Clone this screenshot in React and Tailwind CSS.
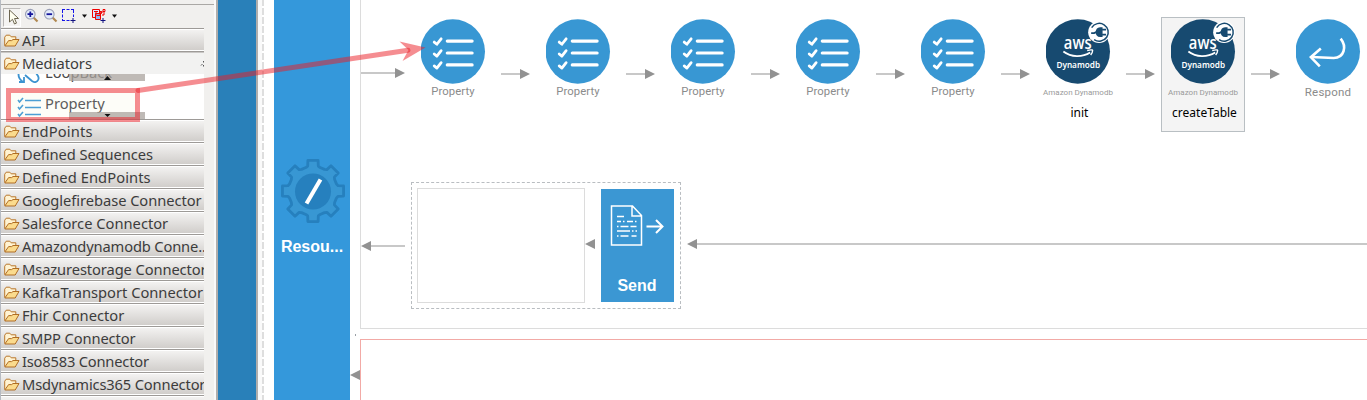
import React from "react";

const ubuntu = "font-['Noto_Sans',sans-serif]";

const drawers = [
  { name: "EndPoints", tracking: "tracking-[0.15px]" },
  { name: "Defined Sequences", tracking: "tracking-[-0.08px]" },
  { name: "Defined EndPoints", tracking: "tracking-[0.08px]" },
  { name: "Googlefirebase Connector", tracking: "tracking-[-0.05px]" },
  { name: "Salesforce Connector", tracking: "tracking-[0px]" },
  { name: "Amazondynamodb Conne..", tracking: "tracking-[-0.15px]" },
  { name: "Msazurestorage Connector", tracking: "tracking-[-0.1px]" },
  { name: "KafkaTransport Connector", tracking: "tracking-[0px]" },
  { name: "Fhir Connector", tracking: "tracking-[0px]" },
  { name: "SMPP Connector", tracking: "tracking-[-0.1px]" },
  { name: "Iso8583 Connector", tracking: "tracking-[-0.2px]" },
  { name: "Msdynamics365 Connector", tracking: "tracking-[-0.15px]" },
  { name: "", tracking: "" },
];

function Folder() {
  return (
    <svg className="h-[13px] w-4 shrink-0" viewBox="0 0 16 13">
      <path d="M.7 11.5V3.2L2.2 1.2h3.6l1.4 1.6h4.6v3" fill="#fff3d2" stroke="#b9772c" />
      <path d="M.8 12 4.6 6.6h3L9 5.5h6L11.2 12z" fill="#fbdb8d" stroke="#b06d24" strokeLinejoin="round" />
    </svg>
  );
}

function Drawer({ name, tracking }) {
  return (
    <div className="flex h-[23px] shrink-0 items-center overflow-hidden border-t border-b border-t-white border-b-[#9d9a97] bg-linear-to-b from-[#f3f2f1] to-[#cfccc9] pl-[3px] shadow-[inset_0_-1px_0_#ffffff]">
      {name && <Folder />}
      <span className={`-mt-[2px] ml-[2px] text-[14.7px] leading-5 whitespace-nowrap text-[#3c3c3c] ${ubuntu} ${tracking}`}>{name}</span>
    </div>
  );
}

function Magnifier({ plus }) {
  return (
    <svg className="h-4 w-4" viewBox="0 0 16 16">
      <path d="m9.5 9.5 4 4" stroke="#b08850" strokeWidth="2.2" />
      <circle cx="6.3" cy="6.2" r="4.8" fill="#e3ebfa" stroke="#9a9fb5" strokeWidth="1.1" />
      <path d={plus ? "M3.5 6.2h5.6M6.3 3.4V9" : "M3.5 6.2h5.6"} stroke="#15159a" strokeWidth="1.8" />
    </svg>
  );
}

function Caret() {
  return (
    <svg className="h-1 w-[5px]" viewBox="0 0 5 4"><path d="M0 .5h5L2.5 3.8z" fill="#111" /></svg>
  );
}

function Toolbar() {
  return (
    <div className="flex h-6 shrink-0 items-center border-t border-[#aaa8a5] bg-[#f1f0ee] pb-px pl-[2px]">
      <div className="mt-0.5 flex h-[19px] w-[18px] items-center justify-center border border-[#b9b7b5] border-r-white border-b-white bg-[#f5f4f2]">
        <svg className="ml-1 h-4 w-3" viewBox="0 0 12 16">
          <path d="M1.5 1v12l3-2.7 2 4.7 2-.9-2-4.6h4z" fill="#fffff0" stroke="#6c6550" />
        </svg>
      </div>
      <div className="ml-[3px] flex"><Magnifier plus /></div>
      <div className="ml-[3px] flex"><Magnifier /></div>
      <svg className="ml-0.5 h-4 w-4" viewBox="0 0 16 16">
        <path d="M1 1.5h12M1.5 2v11M1 12.5h8M12.5 2v7" fill="none" stroke="#1515e8" strokeDasharray="3 1.5" />
        <path d="M9.5 12.5h5M12 10v5" stroke="#101080" />
      </svg>
      <div className="ml-[5px]"><Caret /></div>
      <svg className="ml-1 h-4 w-4" viewBox="0 0 16 16">
        <path d="M1.500 1.500h7v8h-7z" fill="#dbe5ff" stroke="#f00000" />
        <path d="M4.500 5.500h5v6h-5z" fill="#8fb4f4" stroke="#f00000" />
        <path d="M3 3.500h4M5 3.500V8M6 7.500h3V4h3" fill="none" stroke="#f00000" />
        <path d="M8.500 3.500h2v2h-2zM12 1.500h2v2h-2zM13 3.500V7h-2" fill="none" stroke="#f00000" />
        <path d="M9.500 12.500h5M12 10v5" stroke="#101080" />
      </svg>
      <div className="ml-[5px]"><Caret /></div>
    </div>
  );
}

function ScrollStrip({ up }) {
  return (
    <div className={`absolute left-[68px] flex h-[7px] w-[76px] items-center justify-center bg-[#a9a39e]/75 ${up ? "top-0" : "bottom-0"}`}>
      <svg className="h-1 w-[7px]" viewBox="0 0 7 4">
        <path d={up ? "M0 4h7L3.500 0z" : "M.5 0h6L3.500 3z"} fill="#111" />
      </svg>
    </div>
  );
}

function Palette() {
  return (
    <aside className="flex h-full w-[214px] shrink-0 flex-col border-l border-[#b7bbc2] bg-[#f1f0ee]">
      <div className="h-1 shrink-0" />
      <Toolbar />
      <div className="flex w-[203px] shrink-0 flex-col">
        <div className="h-px shrink-0 bg-[#9d9a97]" />
        <Drawer name="API" tracking="tracking-[0px]" />
        <div className="flex h-[22px] shrink-0 items-center border-t border-[#c9c7c5] bg-[#f2f2f1] pl-[3px]">
          <Folder />
          <span className={`-mt-[2px] ml-[2px] text-[14.7px] leading-5 text-[#3c3c3c] ${ubuntu}`}>Mediators</span>
          <svg className="ml-auto h-1.5 w-1" viewBox="0 0 4 6"><path d="M3.500 0v1.500M2.500 3 1 4.500M3.500 4v1.500" stroke="#555" /></svg>
        </div>
        <div className="relative h-[45px] shrink-0 overflow-hidden bg-white">
          <div className="-mt-[12px] flex h-[27px] items-start pl-4">
            <svg className="mt-1 h-[17px] w-[26px]" viewBox="0 0 26 17" fill="none" stroke="#3c93d0" strokeWidth="1.8">
              <path d="M3 4C0 9 2 13 6 16M2 16h5v-5M8 9l7 6c4 3 8-1 6-5L17 4" />
            </svg>
            <span className={`ml-0.5 text-[14.7px] leading-5 text-[#4a4a4a] ${ubuntu}`}>LoopBack</span>
          </div>
          <div className="ml-2 flex h-[30px] w-[128px] items-center bg-[#fdfdf8] pl-2">
            <svg className="mt-1.5 h-[22px] w-[26px] shrink-0" viewBox="0 0 26 22" fill="none" stroke="#4c9fd4" strokeWidth="1.3">
              <path d="M8 4.500h16M8 11.500h16M8 18.500h16" />
              <path d="m1 4 1.500 2L6 2M1 11l1.500 2L6 9M1 18l1.500 2L6 16" strokeWidth="1.6" />
            </svg>
            <span className={`-mt-[2px] ml-0.5 text-[14.7px] leading-5 text-[#5c5c5c] ${ubuntu}`}>Property</span>
          </div>
          <ScrollStrip up />
          <ScrollStrip />
        </div>
        <div className="h-px shrink-0 bg-[#9d9a97]" />
        {drawers.map((d, i) => <Drawer key={i} {...d} />)}
      </div>
    </aside>
  );
}

function gearPath() {
  const pts = [];
  for (let i = 0; i < 8; i++) {
    [[-17, 24.5], [-12, 25.5], [-9.5, 31], [9.5, 31], [12, 25.5], [17, 24.5]].forEach(([deg, r]) => {
      const a = ((i * 45 + deg - 90) * Math.PI) / 180;
      pts.push(`${(33 + r * Math.cos(a)).toFixed(2)} ${(33 + r * Math.sin(a)).toFixed(2)}`);
    });
  }
  return `M${pts.join("L")}Z`;
}

function ResourceColumn() {
  return (
    <div className="flex h-full w-[76px] shrink-0 flex-col items-center bg-[#3498db] pt-[159px]">
      <svg className="-mt-px ml-[2px] h-[66px] w-[66px] shrink-0" viewBox="0 0 66 66">
        <path d={gearPath()} fill="#3897d3" stroke="#2680be" strokeWidth="2.8" strokeLinejoin="round" />
        <circle cx="33" cy="33.5" r="18" fill="#2680be" />
        <path d="M26.500 45.500 40.500 21.500" stroke="#fff" strokeWidth="4" />
      </svg>
      <span className="mt-[11px] font-['Liberation_Sans',sans-serif] text-[16px] leading-6 font-bold text-white">Resou...</span>
    </div>
  );
}

function PropertyIcon() {
  return (
    <svg className="h-[65px] w-[66px] pl-[0.5px]" viewBox="0 0 66 65">
      <circle cx="32.5" cy="32.5" r="32.5" fill="#3897d3" />
      {[22, 34, 46].map((y) => (
        <g key={y} fill="none" stroke="#fff" strokeLinecap="round" strokeLinejoin="round">
          <path d={`M27 ${y}H52`} strokeWidth="3.2" />
          <path d={`M13.800 ${y + 1}l2.700 2.200 4.300-5.500`} strokeWidth="2.8" />
        </g>
      ))}
    </svg>
  );
}

function DynamoIcon() {
  return (
    <svg className="h-[65px] w-[66px] pl-[0.5px]" viewBox="0 0 66 65">
      <circle cx="32.5" cy="32.5" r="32.5" fill="#174a70" />
      <circle cx="54" cy="13" r="11" fill="#fff" />
      <path d="M46.500 8.500A9 9 0 1 1 49 20.500" fill="none" stroke="#174a70" strokeWidth="1.5" />
      <path d="M46 14h3l2-1h2M57 10.500h4M57 15.500h4" fill="none" stroke="#174a70" strokeWidth="1.8" />
      <path d="M57.500 8v10h-2.500c-6 0-6-10 0-10z" fill="#174a70" />
      <text x="18.5" y="30" textLength="28" lengthAdjust="spacingAndGlyphs" className="fill-white font-['Open_Sans',sans-serif] text-[18px] font-semibold">aws</text>
      <path d="M18 32.500c8 6 19 6 27 1" fill="none" stroke="#fff" strokeWidth="1.8" />
      <path d="M42 31.500c3-.7 5.500-1 5.500 0s-.8 3-2 4.500" fill="none" stroke="#fff" strokeWidth="1.4" />
      <text x="11" y="49.5" textLength="44" lengthAdjust="spacingAndGlyphs" className="fill-white font-['Noto_Sans',sans-serif] text-[9px] font-semibold">Dynamodb</text>
    </svg>
  );
}

function RespondIcon() {
  return (
    <svg className="h-[65px] w-[66px] pl-[0.5px]" viewBox="0 0 66 65">
      <circle cx="32.5" cy="32.5" r="32.5" fill="#3897d3" />
      <path d="M45.500 19.500c6.500 8 3.500 19.500-7 19.500L16 38" fill="none" stroke="#fff" strokeWidth="2.6" />
      <path d="M25.500 29.500 15.500 38.200 24.500 47.500" fill="none" stroke="#fff" strokeWidth="2.6" />
    </svg>
  );
}

function Connector() {
  return (
    <svg className="mt-14 h-[10px] w-[29px] shrink-0" viewBox="0 0 29 10">
      <path d="M0 5h19" stroke="#c8c8c8" strokeWidth="2" />
      <path d="M19 0v10l10-5z" fill="#929292" />
    </svg>
  );
}

const nodes = [
  { kind: "Property" }, { kind: "Property" }, { kind: "Property" }, { kind: "Property" }, { kind: "Property" },
  { kind: "Amazon Dynamodb", label: "init" },
  { kind: "Amazon Dynamodb", label: "createTable", selected: true },
  { kind: "Respond" },
];

function Node({ kind, label, selected }) {
  const dynamo = kind === "Amazon Dynamodb";
  return (
    <div className={`flex h-[115px] w-[84px] shrink-0 flex-col items-center border pt-px ${selected ? "border-[#b9bfc3] bg-[#f4f4f4]" : "border-transparent"}`}>
      {dynamo ? <DynamoIcon /> : kind === "Respond" ? <RespondIcon /> : <PropertyIcon />}
      <span className={`font-['Roboto',sans-serif] whitespace-nowrap ${dynamo ? "mt-[3px] text-[8px] leading-3 tracking-[0px] text-[#9a9a9a]" : kind === "Respond" ? "mt-px text-[11.5px] leading-[14px] tracking-[0.2px] text-[#8b8b8b]" : "mt-px text-[11.3px] leading-[14px] tracking-[0.1px] text-[#8b8b8b]"}`}>{kind}</span>
      {label && <span className={`mt-[6px] ml-[3px] text-[12px] leading-[16px] text-black ${ubuntu}`}>{label}</span>}
    </div>
  );
}

function SendBlock() {
  return (
    <div className="flex h-[113px] w-[73px] flex-col items-center bg-[#3b97d3]">
      <svg className="mt-4 mr-px h-[42px] w-[54px] shrink-0" viewBox="0 0 54 42" fill="none" stroke="#fff">
        <path d="M1.500 1h21l9 9.500v29.500h-30zM22 1v10h10" strokeWidth="1.5" />
        <path d="M7 11.500h7M7 16.500h4m2 0h1.500m2.500 0h6m2 0h1.500M7 21.500h1.500m2 0h8m2 0h6M7 26h13m2 0h1.500m2 0h1.500M7 31h1.500m2 0h8m3 0h5" strokeWidth="1.6" />
        <path d="M36.500 21.500h16M46 15l6.500 6.500L46 28" strokeWidth="2" />
      </svg>
      <span className="mt-auto mr-px mb-1 font-['Liberation_Sans',sans-serif] text-[16px] leading-6 font-bold text-white">Send</span>
    </div>
  );
}

function ArrowHeadLeft() {
  return <svg className="h-[10px] w-[10px] shrink-0" viewBox="0 0 10 10"><path d="M10 0v10L0 5z" fill="#929292" /></svg>;
}

function Canvas() {
  return (
    <div className="flex h-full min-w-0 flex-1 flex-col pl-[10px]">
      <section className="flex h-[329px] shrink-0 flex-col overflow-hidden border-b border-l border-[#dcdcdc]">
        <div className="flex pt-[17px]">
          <svg className="mt-[51px] h-[10px] w-11 shrink-0" viewBox="0 0 44 10">
            <path d="M0 5h34" stroke="#c8c8c8" strokeWidth="2" />
            <path d="M34 0v10l10-5z" fill="#929292" />
          </svg>
          <div className="ml-1.5 flex">
            {nodes.map((n, i) => (
              <React.Fragment key={i}>
                {i > 0 && <div className="flex w-[41px] justify-center pr-px -mt-[4px]"><Connector /></div>}
                <Node {...n} />
              </React.Fragment>
            ))}
          </div>
        </div>
        <div className="mt-[50px] flex">
          <div className="mt-[59px] flex h-[10px] w-11 shrink-0 items-center">
            <ArrowHeadLeft />
            <div className="h-0.5 w-[34px] bg-[#c8c8c8]" />
          </div>
          <div className="ml-1.5 flex h-[127px] w-[270px] shrink-0 border border-dashed border-[#b9bdc1] pt-[5px] pl-[5px]">
            <div className="h-[115px] w-[168px] border border-[#dcdcdc] bg-white" />
            <div className="mt-[51px]"><ArrowHeadLeft /></div>
            <div className="mt-px ml-1.5"><SendBlock /></div>
          </div>
          <div className="mt-[57px] ml-1.5 flex h-[10px] flex-1 items-center">
            <ArrowHeadLeft />
            <div className="h-0.5 flex-1 bg-[#c8c8c8]" />
          </div>
        </div>
      </section>
      <div className="-ml-[10px] flex h-[10px] shrink-0 pt-[5px] pl-[5px]">
        <div className="h-[2px] w-px bg-[#9aa0a6]" />
      </div>
      <div className="-ml-[10px] flex flex-1">
        <div className="mt-[31px] flex w-[10px] justify-end"><ArrowHeadLeft /></div>
        <section className="flex-1 border-t border-l border-t-[#f2aaa6] border-l-[#f2aaa6]" />
      </div>
    </div>
  );
}

export default function App() {
  return (
    <main className="relative flex h-[400px] w-[1367px] overflow-hidden bg-white">
      <Palette />
      <div className="w-0.5 shrink-0 bg-[#fafafa]" />
      <div className="w-[42px] shrink-0 border-r-2 border-l-2 border-[#b0aeac] bg-[#2980b9]" />
      <div className="w-1 shrink-0 bg-[#fafafa]" />
      <svg className="h-[400px] w-3 shrink-0" viewBox="0 0 12 400">
        <path d="M1 -1V400" stroke="#dedede" strokeWidth="2" strokeDasharray="7 2" />
      </svg>
      <ResourceColumn />
      <Canvas />
      <svg className="pointer-events-none absolute inset-0 h-[400px] w-[1367px]" viewBox="0 0 1367 400">
        <rect x="8.5" y="90.5" width="129" height="29" fill="none" stroke="#ec1c24" strokeOpacity=".5" strokeWidth="5" />
        <path d="M138 90.500 408 50.300" stroke="#ec1c24" strokeOpacity=".5" strokeWidth="5" strokeLinecap="round" />
        <path d="M425.500 47.500 399.500 41.500 408.500 50 402.500 61z" fill="#ec1c24" fillOpacity=".5" />
      </svg>
    </main>
  );
}
